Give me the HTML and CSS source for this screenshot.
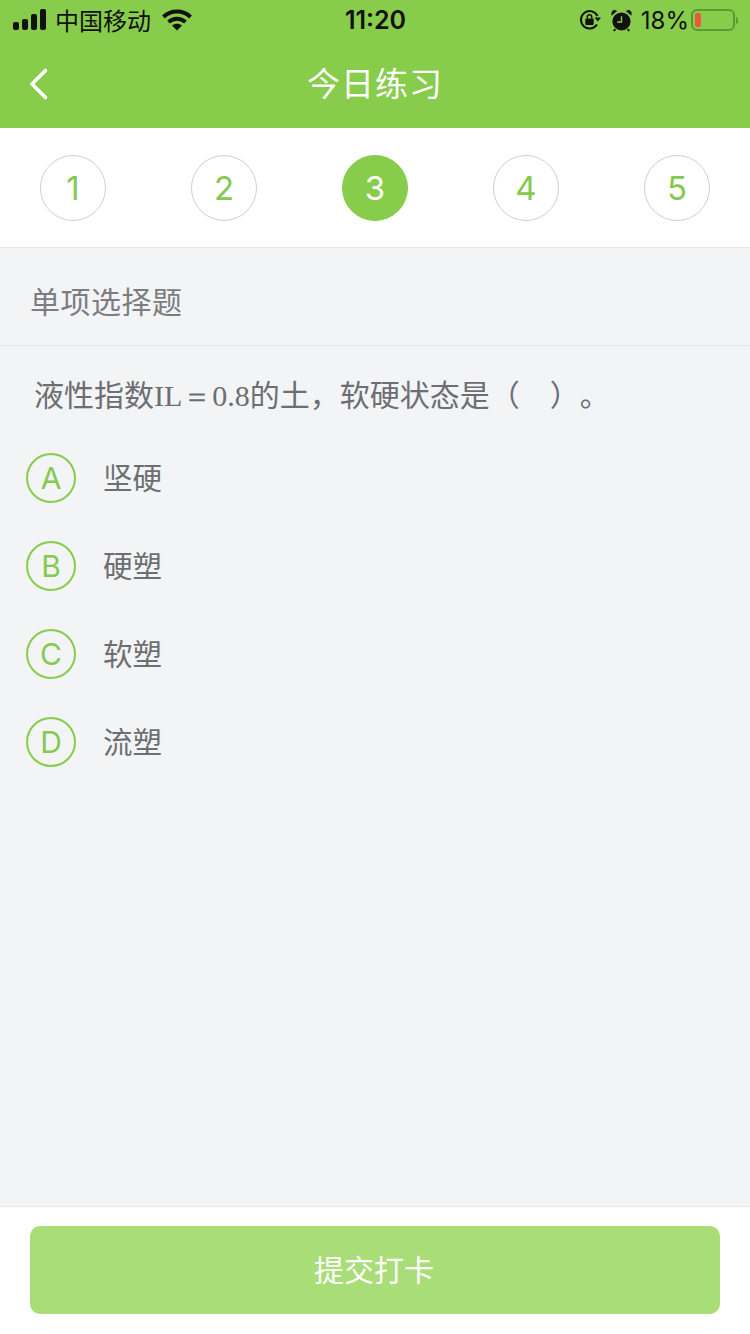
FILE: index.html
```html
<!DOCTYPE html>
<html lang="zh">
<head>
<meta charset="utf-8">
<title>今日练习</title>
<link rel="stylesheet" href="styles.css">
</head>
<body>
<div class="page">
  <header class="top">
    <div class="status">
      <div class="status-left">
        <svg class="signal" width="34" height="22" viewBox="0 0 34 22"><rect x="0" y="13" width="6" height="8" rx="2"/><rect x="9" y="10" width="6" height="11" rx="2"/><rect x="18" y="5" width="6" height="16" rx="2"/><rect x="27" y="0" width="6" height="21" rx="2"/></svg>
        <span class="carrier">中国移动</span>
        <svg class="wifi" width="30" height="22" viewBox="0 0 30 22"><path d="M1.500 8C9 .8 21 .8 28.500 8" fill="none" stroke="#111" stroke-width="4"/><path d="M6.500 13C11.500 8.500 18.500 8.500 23.500 13" fill="none" stroke="#111" stroke-width="4"/><path d="M10 16.500C13 14 17 14 20 16.500L15 21.500Z" fill="#111"/></svg>
      </div>
      <div class="clock">11:20</div>
      <div class="status-right">
        <svg class="lock" width="22" height="22" viewBox="0 0 22 22"><path d="M18 15.500A8.700 8.700 0 1 1 18.500 7" fill="none" stroke="#111" stroke-width="2"/><path d="M15.500 8.500h6.500l-3.200 4z" fill="#111"/><rect x="6.300" y="9.500" width="8.400" height="6.500" rx="1" fill="#111"/><path d="M8.300 9.500V8a2.200 2.200 0 0 1 4.400 0v1.500" fill="none" stroke="#111" stroke-width="1.500"/></svg>
        <svg class="alarm" width="21" height="23" viewBox="0 0 22 24"><circle cx="11" cy="13" r="9.500" fill="#111"/><path d="M0.500 7 6.500 2 3 0.800 0.500 3Z M21.500 7 15.500 2 19 0.800 21.500 3Z" fill="#111"/><path d="M11 7.500V13.500H6.500" fill="none" stroke="#87cc4b" stroke-width="1.500"/><path d="M4.500 21 3 23M17.500 21 19 23" stroke="#111" stroke-width="2"/></svg>
        <span class="percent">18%</span>
        <div class="battery"><div class="battery-level"></div></div>
        <div class="battery-tip"></div>
      </div>
    </div>
    <div class="nav">
      <svg class="back" width="20" height="34" viewBox="0 0 20 34"><path d="M16.500 3.500 3 17 16.500 30.500" fill="none" stroke="#fff" stroke-width="3.600" stroke-linecap="round" stroke-linejoin="round"/></svg>
      <h1 class="title">今日练习</h1>
    </div>
  </header>

  <nav class="steps">
    <div class="step">1</div>
    <div class="step">2</div>
    <div class="step step-current">3</div>
    <div class="step">4</div>
    <div class="step">5</div>
  </nav>

  <main class="body">
    <div class="type">单项选择题</div>
    <div class="question">液性指数<span class="latin">IL＝0.8</span>的土，软硬状态是（　）<span class="stop">。</span></div>
    <ul class="options">
      <li class="option"><span class="badge">A</span><span class="answer">坚硬</span></li>
      <li class="option"><span class="badge">B</span><span class="answer">硬塑</span></li>
      <li class="option"><span class="badge">C</span><span class="answer">软塑</span></li>
      <li class="option"><span class="badge">D</span><span class="answer">流塑</span></li>
    </ul>
  </main>

  <footer class="foot">
    <button class="submit" type="button">提交打卡</button>
  </footer>
</div>
</body>
</html>
```
FILE: styles.css
```css
* { box-sizing: border-box; }
html, body { margin: 0; padding: 0; }
body {
  width: 750px;
  height: 1334px;
  overflow: hidden;
  font-family: "Noto Sans CJK SC", "Liberation Sans", sans-serif;
  background: #f3f4f6;
}
.page { display: flex; flex-direction: column; height: 1334px; }

/* green header with the phone status bar */
.top { height: 128px; background: #87cc4b; flex: none; }
.status {
  height: 40px;
  display: grid;
  grid-template-columns: 1fr auto 1fr;
  align-items: center;
  color: #111;
  padding: 0 12px 0 13px;
}
.status-left, .status-right { display: flex; align-items: center; }
.status-right { justify-content: flex-end; }
.signal { fill: #111; }
.carrier { font-size: 24px; line-height: 30px; margin-left: 8px; }
.wifi { margin-left: 11px; }
.clock { font-family: Inter, "Liberation Sans", sans-serif; font-size: 25px; font-weight: 600; }
.lock { margin-right: 10px; }
.alarm { margin-right: 9px; }
.percent { font-family: Inter, "Liberation Sans", sans-serif; font-size: 24px; margin-right: 2px; }
.battery {
  width: 44px;
  height: 22px;
  border: 2px solid #5b9a30;
  border-radius: 6px;
  padding: 2px;
}
.battery-level { width: 6px; height: 14px; background: #f0563a; border-radius: 2px; }
.battery-tip { width: 2px; height: 7px; background: #5b9a30; margin-left: 1px; border-radius: 0 2px 2px 0; }

.nav { height: 88px; position: relative; display: flex; align-items: center; justify-content: center; }
.back { position: absolute; left: 29px; top: 27px; }
.title { margin: 0 0 4px; font-size: 33px; font-weight: 400; color: #fff; letter-spacing: 1px; line-height: 40px; }

/* numbered question tabs */
.steps {
  height: 120px;
  flex: none;
  background: #fff;
  border-bottom: 1px solid #e6e7e9;
  display: flex;
  justify-content: space-between;
  align-items: flex-start;
  padding: 27px 40px 0;
}
.step {
  width: 66px;
  height: 66px;
  border-radius: 50%;
  border: 1px solid #cfcfcf;
  color: #85c950;
  font-family: Inter, "Liberation Sans", sans-serif;
  font-size: 33px;
  display: flex;
  align-items: center;
  justify-content: center;
}
.step-current { background: #87cc4b; border-color: #87cc4b; color: #fff; }

/* question area */
.body { flex: 1; min-height: 0; }
.type {
  height: 98px;
  padding-left: 30px;
  border-bottom: 1px solid #e6e7e9;
  font-size: 30px;
  line-height: 104px;
  color: #7b7d80;
  letter-spacing: 0.500px;
}
.question {
  margin-top: 24px;
  padding-left: 34px;
  font-size: 30px;
  line-height: 46px;
  color: #6c6e71;
  white-space: nowrap;
}
.latin { font-family: "Liberation Serif", serif; font-size: 30px; }
.stop { margin-left: 15px; }
.options { list-style: none; margin: 15px 0 0; padding: 0 0 0 26px; }
.option { height: 88px; display: flex; align-items: center; }
.badge {
  width: 50px;
  height: 50px;
  border: 2px solid #87cc4b;
  border-radius: 50%;
  color: #85c950;
  font-family: Inter, "Liberation Sans", sans-serif;
  font-size: 30px;
  display: flex;
  align-items: center;
  justify-content: center;
}
.answer { margin-left: 27px; font-size: 29.500px; line-height: 40px; color: #6c6e71; position: relative; top: -2px; }

/* submit bar */
.foot {
  height: 128px;
  flex: none;
  background: #fff;
  border-top: 1px solid #e6e7e9;
  padding: 19px 30px 0;
}
.submit {
  display: block;
  width: 690px;
  height: 88px;
  border: 0;
  border-radius: 10px;
  padding: 0 2px 4px 0;
  background: #a9dd78;
  color: #fff;
  font-family: "Noto Sans CJK SC", sans-serif;
  font-size: 30px;
}
```
